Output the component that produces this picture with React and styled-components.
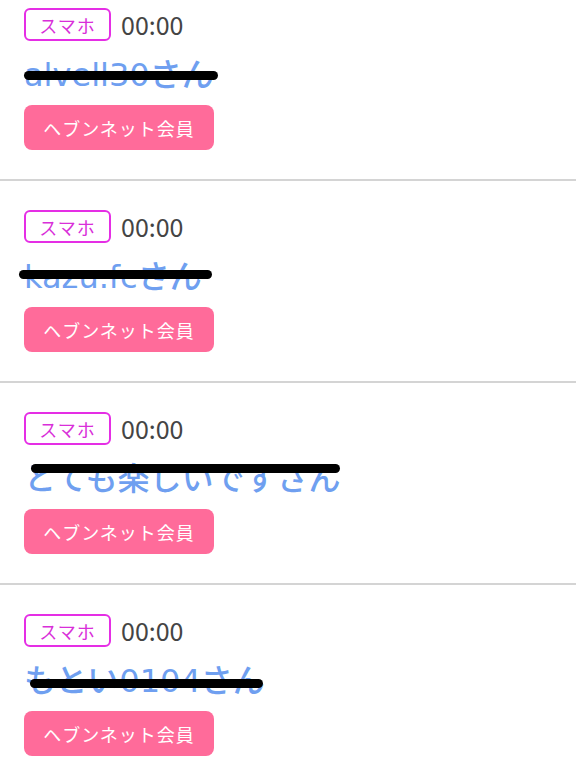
import React from "react";
import styled, { createGlobalStyle } from "styled-components";

const GlobalStyle = createGlobalStyle`
    html, body {
        margin: 0;
        padding: 0;
        background: #fff;
        font-family: "Noto Sans CJK JP", "Noto Sans", sans-serif;
    }
`;

const items = [
    { name: "alvell30さん", strike: { left: 0, top: 29, width: 194 } },
    { name: "kazu.fcさん", strike: { left: -5, top: 26, width: 193 } },
    { name: "とても楽しいですさん", strike: { left: 7, top: 18, width: 309 } },
    { name: "もとい0104さん", strike: { left: 6, top: 31, width: 233 } },
];

const App = () => {
    return (
        <>
            <GlobalStyle />
            <Lista>
                {items.map((item, i) => (
                    <Fila key={i}>
                        <Cabecera>
                            <Etiqueta>スマホ</Etiqueta>
                            <Hora>00:00</Hora>
                        </Cabecera>
                        <Nombre>
                            {item.name}
                            <Tachado
                                style={{
                                    left: item.strike.left,
                                    top: item.strike.top - 4.5,
                                    width: item.strike.width,
                                }}
                            />
                        </Nombre>
                        <BotonMiembro>ヘブンネット会員</BotonMiembro>
                    </Fila>
                ))}
            </Lista>
        </>
    );
};

export default App;

const Lista = styled.div`
    width: 576px;
    display: flex;
    flex-direction: column;
`;

const Fila = styled.div`
    padding: 29px 24px 29px;
    border-bottom: 2px solid #d4d4d4;
    display: flex;
    flex-direction: column;
    align-items: flex-start;

    &:first-child {
        padding-top: 8px;
    }
`;

const Cabecera = styled.div`
    display: flex;
    align-items: center;
    gap: 10px;
    height: 33px;
`;

const Etiqueta = styled.span`
    box-sizing: border-box;
    width: 87px;
    height: 33px;
    border: 2px solid #e52ee5;
    border-radius: 6px;
    color: #d92fd9;
    font-size: 18px;
    letter-spacing: 1px;
    display: flex;
    align-items: center;
    justify-content: center;
`;

const Hora = styled.span`
    font-size: 25px;
    color: #444;
    line-height: 1;
`;

const Nombre = styled.div`
    position: relative;
    margin-top: 5px;
    padding-top: 6px;
    height: 40px;
    line-height: 46px;
    font-family: "DejaVu Sans", "Noto Sans CJK JP", sans-serif;
    font-size: 32px;
    font-weight: 500;
    color: #6f9ff0;
    white-space: nowrap;
`;

const Tachado = styled.span`
    position: absolute;
    height: 9px;
    border-radius: 5px;
    background: #000;
`;

const BotonMiembro = styled.button`
    margin-top: 13px;
    width: 190px;
    height: 45px;
    border: none;
    border-radius: 8px;
    background: #ff6b9a;
    color: #fff;
    font-family: "Noto Sans CJK JP", "Noto Sans", sans-serif;
    font-size: 18px;
    letter-spacing: 1px;
    padding: 0;
`;
